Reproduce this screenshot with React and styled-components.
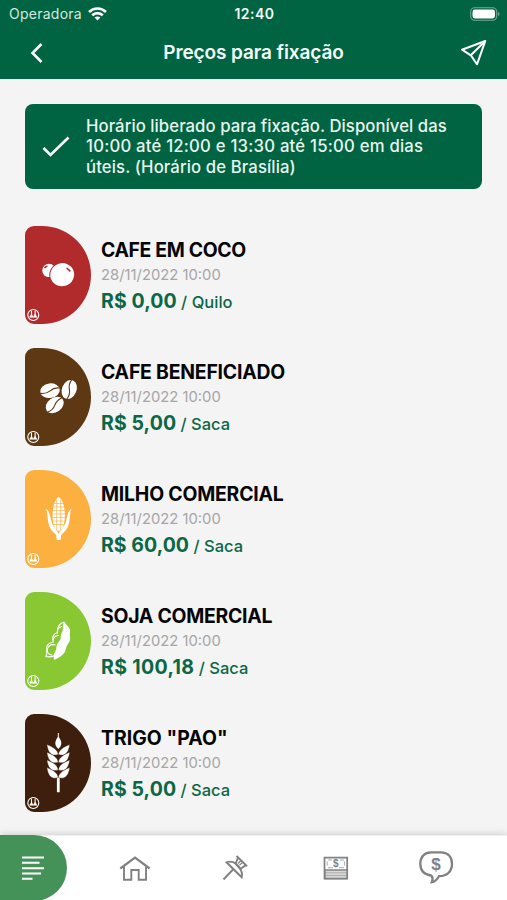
import React from "react";
import styled, { createGlobalStyle } from "styled-components";

const Global = createGlobalStyle`
  * { box-sizing: border-box; }
  html, body { margin: 0; }
  body { background: #f4f4f4; font-family: Inter, "Noto Sans", sans-serif; overflow: hidden; }
  svg { display: block; flex: none; }
`;

const Screen = styled.div`
  width: 507px;
  height: 900px;
  display: flex;
  flex-direction: column;
  background: #f4f4f4;
`;

const Header = styled.header`
  height: 79px;
  flex: none;
  background: #006442;
  color: #f5fbf8;
`;

const StatusBar = styled.div`
  height: 27px;
  display: grid;
  grid-template-columns: 1fr auto 1fr;
  align-items: center;
  padding: 0 7px 0 9px;
`;

const Carrier = styled.div`
  display: flex;
  align-items: center;
  gap: 6px;
  font-size: 14px;
  line-height: 27px;
  letter-spacing: 0.25px;
  color: #d5e8df;
`;

const Clock = styled.div`
  font-size: 14px;
  font-weight: 600;
  letter-spacing: 0.5px;
`;

const BatterySlot = styled.div`
  display: flex;
  justify-content: flex-end;
`;

const TitleBar = styled.div`
  height: 51px;
  display: grid;
  grid-template-columns: 60px 1fr 60px;
  align-items: center;
`;

const IconButton = styled.button`
  border: 0;
  padding: ${(p) => p.$pad};
  background: none;
  color: #fff;
  display: flex;
`;

const Title = styled.h1`
  margin: 0;
  text-align: center;
  font-size: 19px;
  line-height: 51px;
  font-weight: 600;
  letter-spacing: -0.1px;
`;

const Content = styled.main`
  flex: 1;
  min-height: 0;
  padding: 25px 25px 0;
  overflow: hidden;
`;

const Notice = styled.section`
  height: 85px;
  width: 457px;
  display: flex;
  align-items: center;
  border-radius: 8px;
  background: #006442;
  color: #e9f5ef;
  padding-left: 17px;
  gap: 16px;
`;

const NoticeLine = styled.div`
  font-size: 16.7px;
  line-height: 20.5px;
  font-weight: 500;
  letter-spacing: ${(p) => p.$spacing};
  white-space: nowrap;
`;

const List = styled.ul`
  list-style: none;
  margin: 37px 0 0;
  padding: 0;
  display: flex;
  flex-direction: column;
  gap: 24.1px;
`;

const Item = styled.li`
  height: 98px;
  display: flex;
  gap: 10px;
`;

const Tile = styled.div`
  width: 66px;
  height: 98px;
  border-radius: 9px 49px 49px 9px;
  background: ${(p) => p.$color};
  overflow: hidden;
`;

const Details = styled.div`
  padding-top: 10px;
  white-space: nowrap;
`;

const Name = styled.h2`
  margin: 0;
  font-size: 19.4px;
  line-height: 28px;
  font-weight: 700;
  color: #050505;
  letter-spacing: ${(p) => p.$spacing};
`;

const Stamp = styled.div`
  font-size: 14.8px;
  line-height: 23px;
  color: #a6a6a6;
`;

const Price = styled.div`
  font-size: 16.5px;
  line-height: 28px;
  font-weight: 500;
  color: #0b6746;
`;

const Amount = styled.strong`
  font-size: 19.5px;
  font-weight: 700;
  letter-spacing: ${(p) => p.$spacing};
`;

const NavBar = styled.nav`
  height: 65px;
  flex: none;
  display: flex;
  background: linear-gradient(#f0f0f0 1px, #fff 1px);
  box-shadow: 0 -2px 6px rgba(0, 0, 0, 0.12);
  color: #818181;
`;

const ActiveTab = styled.button`
  border: 0;
  padding: 0;
  width: 67px;
  height: 66px;
  background: #459258;
  border-radius: 0 33px 33px 0;
  color: #fff;
`;

const Tab = styled.button`
  border: 0;
  padding: 0;
  height: 66px;
  width: ${(p) => p.$width};
  background: none;
  color: inherit;
`;

const WifiIcon = () => (
  <svg width="19" height="14" viewBox="0 0 19 14" fill="none" stroke="#fff" strokeWidth="2.600">
    <path d="M1 5C5.800.4 13.200.4 18 5" />
    <path d="M4.200 8.300c3-2.900 7.600-2.900 10.600 0" />
    <path d="M6.600 10.500c1.600-1.500 4.200-1.500 5.800 0l-2.900 2.900z" fill="#fff" stroke="none" />
  </svg>
);

const BatteryIcon = () => (
  <svg width="30" height="14" viewBox="0 0 30 14">
    <rect x=".7" y=".7" width="26" height="12.600" rx="4" fill="none" stroke="#73a994" strokeWidth="1.100" />
    <rect x="2.500" y="2.500" width="22.500" height="9" rx="2.400" fill="#fff" />
    <path d="M28 5v4c2-.8 2-3.200 0-4z" fill="#73a994" />
  </svg>
);

const BackIcon = () => (
  <svg width="14" height="20" viewBox="0 0 14 20" fill="none" stroke="currentColor" strokeWidth="2.500">
    <path d="M11.500 1L2.500 10l9 9" />
  </svg>
);

const SendIcon = () => (
  <svg width="28" height="28" viewBox="0 0 28 28" fill="none" stroke="currentColor" strokeWidth="2" strokeLinejoin="round">
    <path d="M25.300 2L2 10.700l8.800 5.600 6.200 9z" />
    <path d="M25.300 2L10.800 16.300" />
  </svg>
);

const CheckIcon = () => (
  <svg width="28" height="22" viewBox="0 0 28 22" fill="none" stroke="#fff" strokeWidth="2.600">
    <path d="M1.500 12l7 7L26.500 1.500" />
  </svg>
);

const Seal = () => (
  <g fill="none" stroke="#fff">
    <circle cx="8.300" cy="89" r="5.500" strokeWidth="1.100" />
    <path d="M6.500 84.500v5.500M10.100 84.500v5.500" strokeWidth="1.100" />
    <path d="M4.600 91.200l1.900-3 1.800 3zM8.300 91.200l1.800-3 1.900 3z" fill="#fff" strokeWidth=".6" />
  </g>
);

const Cherries = ({ color }) => (
  <g fill="#fff">
    <ellipse cx="24" cy="44.400" rx="6.700" ry="6.700" />
    <ellipse cx="37.200" cy="48.700" rx="13" ry="12.500" fill={color} transform="rotate(-20 37.200 48.700)" />
    <ellipse cx="37.200" cy="48.700" rx="12" ry="11.500" transform="rotate(-20 37.200 48.700)" />
    <g fill="none" stroke={color} strokeWidth="1.500" strokeLinecap="round">
      <path d="M42 42.300l2.900 2.600M19.900 41.500l2-1.300" />
    </g>
  </g>
);

const Bean = ({ x, y, angle, color }) => (
  <g transform={`translate(${x} ${y}) rotate(${angle})`}>
    <ellipse rx="9.800" ry="7.300" fill="#fff" />
    <path d="M-9.800 1.500C-6 2.500-3 2.200 0 .2S6-2.500 9.800-1.500" fill="none" stroke={color} strokeWidth="1.100" />
  </g>
);

const Beans = ({ color }) => (
  <g>
    <Bean x={25} y={42.700} angle={-7} color={color} />
    <Bean x={44.200} y={41.500} angle={-67} color={color} />
    <Bean x={29.700} y={57} angle={-37} color={color} />
  </g>
);

const Corn = ({ color }) => (
  <g>
    <path d="M33.700 27.300c3.400 0 6.200 10 6.200 18.200 0 7-2.200 15.500-6.200 15.500s-6.200-8.500-6.200-15.500c0-8.200 2.800-18.200 6.200-18.200z" fill="#fff" />
    <path d="M27 33.500h13M27 37h14M27 40.500h14M27 44h14M27 47.500h14M27 51h14M27 54.500h14M31.700 28v32M35.700 28v32" stroke={color} strokeWidth=".65" />
    <path d="M21 38.400c3.800 3 4.200 8 5.200 12.200 1 5 4.600 8.400 7.500 12.800 2.900-4.400 6.500-7.800 7.500-12.800 1-4.200 1.400-9.200 5.200-12.200-1.800 5-1.400 11-2.600 15.700-1.100 4.600-4.300 8.200-7.500 10.600l-.7 5.300h-3.800l-.7-5.300c-3.200-2.400-6.400-6-7.500-10.600-1.200-4.700-.8-10.700-2.600-15.700z" fill="#fff" />
  </g>
);

const SoyPod = () => (
  <g>
    <g fill="none" stroke="#fff" strokeWidth="1.100">
      <path d="M39 30c-4 1.500-6.500 4.500-6.300 8.500M32.500 40.500c-3.500 1-5.200 4-4.700 7.500M27 50.500c-4.200.7-6 3.800-5.300 7.300l.2 3.500-1 3.200c3 .8 5.500.4 8.500-.8" />
      <path d="M37 34.500c-3.700.5-5.200 3-4.500 7M34 43.500c-4.500-.3-6.500 3-6 7.500M30.500 53c-4.700-1.400-8.300 1.500-8.300 5.200 0 2.800 2 5 5 4.600" />
    </g>
    <path d="M39.300 29.400c1.200 3 4.700 5 5.700 8.200.7 2.500-.7 4.300 0 7.300.9 4-1.600 6.100-3 8.600-1.300 2.300-.9 5.200-3.200 8-2.400 2.800-5.600 4.500-9.500 6.500-1.400-3-.8-6 1.200-9 1.700-2.600.2-4.500 2-7.500 1.500-2.600 3.300-3 3.200-6.500 0-3.400 2-4.700 2.200-8 .1-3-.4-5 1.400-7.600z" fill="#fff" />
  </g>
);

const Wheat = ({ color }) => (
  <g fill="#fff">
    <path d="M33.300 19v7" stroke="#fff" strokeWidth="1" />
    <path d="M31.900 63h2.800v15.200h-2.800z" />
    <path d="M33.300 22.500c4 5 4 8.800 0 12.500-4-3.700-4-7.500 0-12.500z" />
    {[0, 7.700, 15.400, 23.100].map((offset) => (
      <g key={offset} transform={`translate(33.300 ${offset})`} stroke={color} strokeWidth=".4">
        <path d="M-.1 40.500c-.6-5-5-7.200-11.300-10 1 7 3.800 12.500 11.300 10z" />
        <path d="M.1 40.500c.6-5 5-7.200 11.300-10-1 7-3.800 12.500-11.300 10z" />
      </g>
    ))}
  </g>
);

const MenuIcon = () => (
  <svg width="67" height="66" viewBox="0 0 67 66" stroke="currentColor" strokeWidth="1.900">
    <path d="M22 22.500h22M22 27.800h17.500M22 33.200h22M22 38.500h19M22 43.800h10.500" />
  </svg>
);

const HomeIcon = () => (
  <svg width="136" height="66" viewBox="67 0 136 66" fill="none" stroke="currentColor" strokeWidth="1.900">
    <path d="M120.300 33.500L135 22.500l14.700 11" strokeWidth="2.200" />
    <path d="M124 31.500v13.300h7.300V35h7.400v9.800h7.300V31.500" />
  </svg>
);

const PinIcon = () => (
  <svg width="66" height="66" viewBox="203 0 66 66" fill="none" stroke="currentColor" strokeWidth="1.900">
    <path d="M223.500 44.500l10-10.500" />
    <path d="M226.500 27.300c3.500-1.200 6.600-.7 9.200 1.300l4.300 5c1.800 2.600 2.400 5.600 1.700 8.700z" />
    <path d="M236.500 21l10.500 10.300M238 22.500l-2.300 6 4.800 5.200 5-3.300" />
    <path d="M238 28.500l3.300-3.200M239.500 30l3.600-3" strokeWidth="1.200" />
  </svg>
);

const MoneyIcon = () => (
  <svg width="134" height="66" viewBox="269 0 134 66" fill="none" stroke="currentColor">
    <path d="M324.500 22.700h22.700v21h-22.700z" strokeWidth="1.700" />
    <path d="M325 35h22v8.500h-22z" fill="#d8d8d8" strokeWidth="1.400" />
    <path d="M325 37.800h22M325 40.500h22" strokeWidth=".5" />
    <path d="M328 25h4M340 25h4M328 32.700h5M339 32.700h5M327.200 26.500v4M344.600 26.500v4" strokeWidth=".9" opacity=".75" />
    <text x="335.800" y="32.400" textAnchor="middle" fontSize="10" fontWeight="700" fill="currentColor" stroke="none">$</text>
  </svg>
);

const ChatIcon = () => (
  <svg width="104" height="66" viewBox="403 0 104 66">
    <path d="M431 17.300h10c7 0 11 4.700 11 11.700s-4.500 12.200-13 12.200c-1.700 3-4 5.500-7.200 6 1-2 .8-4.800-.3-6.500-7-1-11.200-5-11.200-11.900 0-7 4.200-11.500 10.700-11.500z" fill="none" stroke="currentColor" strokeWidth="2.300" />
    <text x="436" y="35" textAnchor="middle" fontSize="17" fontWeight="600" fill="currentColor">$</text>
  </svg>
);

const products = [
  { name: "CAFE EM COCO", amount: "R$ 0,00", unit: "Quilo", color: "#b12b2d", Art: Cherries, spacing: "-0.35px", amountSpacing: "0.1px" },
  { name: "CAFE BENEFICIADO", amount: "R$ 5,00", unit: "Saca", color: "#5e3713", Art: Beans, spacing: "-0.2px", amountSpacing: "0.1px" },
  { name: "MILHO COMERCIAL", amount: "R$ 60,00", unit: "Saca", color: "#fbb040", Art: Corn, spacing: "-0.2px", amountSpacing: "0.05px" },
  { name: "SOJA COMERCIAL", amount: "R$ 100,18", unit: "Saca", color: "#89c832", Art: SoyPod, spacing: "-0.25px", amountSpacing: "0.35px" },
  { name: 'TRIGO "PAO"', amount: "R$ 5,00", unit: "Saca", color: "#3e1f0d", Art: Wheat, spacing: "0.05px", amountSpacing: "0.1px" },
];

export default function App() {
  return (
    <Screen>
      <Global />
      <Header>
        <StatusBar>
          <Carrier>Operadora <WifiIcon /></Carrier>
          <Clock>12:40</Clock>
          <BatterySlot><BatteryIcon /></BatterySlot>
        </StatusBar>
        <TitleBar>
          <IconButton $pad="0 0 0 30px" aria-label="Voltar"><BackIcon /></IconButton>
          <Title>Preços para fixação</Title>
          <IconButton $pad="0 0 0 13px" aria-label="Enviar"><SendIcon /></IconButton>
        </TitleBar>
      </Header>
      <Content>
        <Notice>
          <CheckIcon />
          <div>
            <NoticeLine $spacing="0.07px">Horário liberado para fixação. Disponível das</NoticeLine>
            <NoticeLine $spacing="0.22px">10:00 até 12:00 e 13:30 até 15:00 em dias</NoticeLine>
            <NoticeLine $spacing="0.12px">úteis. (Horário de Brasília)</NoticeLine>
          </div>
        </Notice>
        <List>
          {products.map(({ name, amount, unit, color, Art, spacing, amountSpacing }) => (
            <Item key={name}>
              <Tile $color={color}>
                <svg width="66" height="98" viewBox="0 0 66 98">
                  <Art color={color} />
                  <Seal />
                </svg>
              </Tile>
              <Details>
                <Name $spacing={spacing}>{name}</Name>
                <Stamp>28/11/2022 10:00</Stamp>
                <Price><Amount $spacing={amountSpacing}>{amount}</Amount> / {unit}</Price>
              </Details>
            </Item>
          ))}
        </List>
      </Content>
      <NavBar>
        <ActiveTab aria-label="Menu"><MenuIcon /></ActiveTab>
        <Tab $width="136px" aria-label="Início"><HomeIcon /></Tab>
        <Tab $width="66px" aria-label="Fixar"><PinIcon /></Tab>
        <Tab $width="134px" aria-label="Pagamentos"><MoneyIcon /></Tab>
        <Tab $width="104px" aria-label="Cotações"><ChatIcon /></Tab>
      </NavBar>
    </Screen>
  );
}
